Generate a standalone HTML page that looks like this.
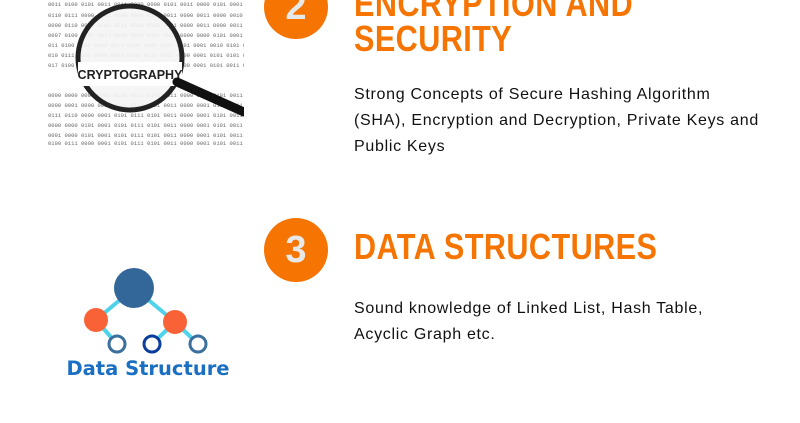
<!DOCTYPE html>
<html><head><style>
body{margin:0;width:800px;height:423px;background:#fff;position:relative;overflow:hidden;font-family:"Liberation Sans",sans-serif}
.c{position:absolute;width:64px;height:64px;border-radius:50%;background:#f57402;color:#e8e8e8;font-weight:bold;font-size:38px;text-align:center;line-height:64px}
.t{position:absolute;left:354px;color:#f57402;font-weight:bold;font-size:36px;line-height:36px;letter-spacing:0.5px;white-space:nowrap;transform:scaleX(0.85);transform-origin:0 0}
.p{position:absolute;left:354px;color:#111;font-size:16px;line-height:26px;white-space:nowrap;letter-spacing:0.7px}
</style></head><body>
<svg style="position:absolute;left:44px;top:0" width="200" height="148" viewBox="0 0 200 148">
<g font-family="Liberation Mono" font-size="5.5" fill="#666">
<text x="4" y="6">0011 0100 0101 0011 0011 0000 0000 0101 0011 0000 0101 0001 0111</text>
<text x="4" y="17">0110 0111 0000 0001 0000 0000 0101 0011 0000 0011 0000 0010 0101</text>
<text x="4" y="27">0000 0110 0011 0101 0011 0000 0000 0101 0000 0011 0000 0011 0011</text>
<text x="4" y="37">0007 0100 0101 0011 0000 0000 0101 0011 0000 0000 0101 0001 0010</text>
<text x="4" y="47">011 0100 0101 0101 0011 0000 0101 0101 0101 0001 0010 0101 0000</text>
<text x="4" y="57">010 0111 0001 0000 0001 0101 0111 0011 0000 0001 0101 0101 0000</text>
<text x="4" y="67">017 0100 0001 0000 0101 0011 0000 0011 0000 0001 0101 0011 0000</text>
<text x="4" y="97">0000 0000 0000 0001 0101 0111 0101 0011 0000 0001 0101 0011 0010</text>
<text x="4" y="107">0000 0001 0000 0001 0101 0111 0101 0011 0000 0001 0101 0011 0000</text>
<text x="4" y="117">0111 0110 0000 0001 0101 0111 0101 0011 0000 0001 0101 0011 0001</text>
<text x="4" y="127">0000 0000 0101 0001 0101 0111 0101 0011 0000 0001 0101 0011 0000</text>
<text x="4" y="137">0001 0000 0101 0001 0101 0111 0101 0011 0000 0001 0101 0011 0000</text>
<text x="4" y="145">0100 0111 0000 0001 0101 0111 0101 0011 0000 0001 0101 0011 0000</text>
</g>
<circle cx="86" cy="58" r="52" fill="#f4f4f4" fill-opacity="0.9" stroke="#222" stroke-width="5"/>
<rect x="34" y="62" width="104" height="24" fill="#fff"/>
<text x="86" y="79" font-size="12.5" font-weight="bold" text-anchor="middle" fill="#222" font-family="Liberation Sans">CRYPTOGRAPHY</text>
<path d="M133 82 L200 112" stroke="#111" stroke-width="9" stroke-linecap="round"/>
</svg>
<svg style="position:absolute;left:60px;top:260px" width="180" height="125" viewBox="0 0 180 125">
<g stroke="#4fd3ea" stroke-width="4"><line x1="74" y1="28" x2="36" y2="60"/><line x1="74" y1="28" x2="115" y2="62"/><line x1="36" y1="60" x2="57" y2="84"/><line x1="115" y1="62" x2="92" y2="84"/><line x1="115" y1="62" x2="138" y2="84"/></g>
<circle cx="74" cy="28" r="20" fill="#336699"/>
<circle cx="36" cy="60" r="12" fill="#f86236"/><circle cx="115" cy="62" r="12" fill="#f86236"/>
<circle cx="57" cy="84" r="8" fill="#fff" stroke="#3a6f9e" stroke-width="3"/>
<circle cx="92" cy="84" r="8" fill="#fff" stroke="#0b3d9c" stroke-width="3"/>
<circle cx="138" cy="84" r="8" fill="#fff" stroke="#3a6f9e" stroke-width="3"/>
<text x="88" y="115" text-anchor="middle" font-family="DejaVu Sans" font-weight="bold" font-size="19.5" fill="#1a6fc2">Data Structure</text>
</svg>
<div class="c" style="left:264px;top:-25px">2</div>
<div class="t" style="top:-14px">ENCRYPTION AND</div>
<div class="t" style="top:21px">SECURITY</div>
<div class="p" style="top:82px">Strong Concepts of Secure Hashing Algorithm<br>(SHA), Encryption and Decryption, Private Keys and<br>Public Keys</div>
<div class="c" style="left:264px;top:218px">3</div>
<div class="t" style="top:229px">DATA STRUCTURES</div>
<div class="p" style="top:296px">Sound knowledge of Linked List, Hash Table,<br>Acyclic Graph etc.</div>
</body></html>
